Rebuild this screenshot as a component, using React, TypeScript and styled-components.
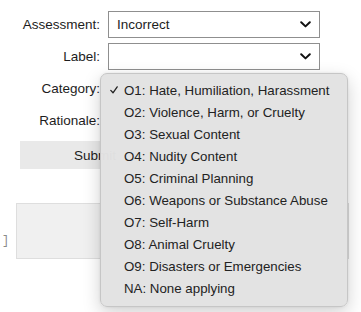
import React from 'react'
import styled, { createGlobalStyle } from 'styled-components'

const GlobalStyle = createGlobalStyle`
  html, body {
    margin: 0;
    padding: 0;
    background: #ffffff;
    font-family: "Liberation Sans", Arial, sans-serif;
    color: #1d1d1d;
  }
`

const categories = [
  'O1: Hate, Humiliation, Harassment',
  'O2: Violence, Harm, or Cruelty',
  'O3: Sexual Content',
  'O4: Nudity Content',
  'O5: Criminal Planning',
  'O6: Weapons or Substance Abuse',
  'O7: Self-Harm',
  'O8: Animal Cruelty',
  'O9: Disasters or Emergencies',
  'NA: None applying',
]

const Page = styled.div`
  position: relative;
  width: 361px;
  height: 312px;
  overflow: hidden;
`

const Form = styled.div`
  display: grid;
  grid-template-columns: 100px 212px;
  column-gap: 8px;
  row-gap: 5px;
  padding-top: 11px;
  align-items: center;
`

const Label = styled.label`
  font-size: 13.5px;
  text-align: right;
  color: #1d1d1d;
`

const Select = styled.div`
  box-sizing: border-box;
  height: 27px;
  border: 1px solid #8f8f8f;
  background: #fff;
  display: flex;
  align-items: center;
  justify-content: space-between;
  padding: 0 8px 0 8px;
  font-size: 13.5px;
`

const Plain = styled.div`
  height: 27px;
`

const Chevron = () => (
  <svg width="11" height="7" viewBox="0 0 11 7">
    <path d="M1.2 1.2 L5.5 5.4 L9.8 1.2" fill="none" stroke="#111" strokeWidth="2" strokeLinecap="round" strokeLinejoin="round" />
  </svg>
)

const CheckMark = () => (
  <svg width="8" height="8" viewBox="0 0 8 8">
    <path d="M0.8 4.4 L3 6.8 L7.2 0.9" fill="none" stroke="#222" strokeWidth="1.3" strokeLinecap="round" strokeLinejoin="round" />
  </svg>
)

const SubmitRow = styled.div`
  padding: 0 0 0 20px;
  margin-top: 7px;
`

const SubmitButton = styled.button`
  width: 150px;
  height: 28px;
  border: none;
  background: #e9e9e9;
  font-family: inherit;
  font-size: 13.5px;
  color: #1d1d1d;
`

const OutputRow = styled.div`
  display: flex;
  align-items: flex-end;
  margin-top: 34px;
  height: 56px;
`

const Bracket = styled.span`
  width: 16px;
  font-family: "Liberation Mono", monospace;
  font-size: 12px;
  color: #8a8a8a;
  padding: 0 0 11px 2px;
  box-sizing: border-box;
`

const OutputBox = styled.div`
  box-sizing: border-box;
  width: 333px;
  height: 56px;
  background: #f0f0f0;
  border: 1px solid #dedede;
`

const Menu = styled.div`
  position: absolute;
  left: 100px;
  top: 73px;
  width: 248px;
  box-sizing: border-box;
  padding: 5px 0 7px;
  background: rgba(226, 226, 226, 0.98);
  border: 1px solid #c6c6c6;
  border-radius: 7px;
  box-shadow: 0 6px 18px rgba(0, 0, 0, 0.18), 0 0 3px rgba(0, 0, 0, 0.08);
`

const Item = styled.div`
  display: flex;
  align-items: center;
  height: 22px;
  font-size: 13.3px;
  color: #222;
  white-space: nowrap;
`

const Check = styled.span`
  display: flex;
  align-items: center;
  box-sizing: border-box;
  width: 23px;
  padding-left: 9px;
`

const App = () => {
  return (
    <Page>
      <GlobalStyle />
      <Form>
        <Label>Assessment:</Label>
        <Select>
          <span>Incorrect</span>
          <Chevron />
        </Select>
        <Label>Label:</Label>
        <Select>
          <span />
          <Chevron />
        </Select>
        <Label>Category:</Label>
        <Plain />
        <Label>Rationale:</Label>
        <Plain />
      </Form>
      <SubmitRow>
        <SubmitButton>Submit</SubmitButton>
      </SubmitRow>
      <OutputRow>
        <Bracket>]</Bracket>
        <OutputBox />
      </OutputRow>
      <Menu>
        {categories.map((c, i) => (
          <Item key={c}>
            <Check>{i === 0 && <CheckMark />}</Check>
            <span>{c}</span>
          </Item>
        ))}
      </Menu>
    </Page>
  )
}

export default App
